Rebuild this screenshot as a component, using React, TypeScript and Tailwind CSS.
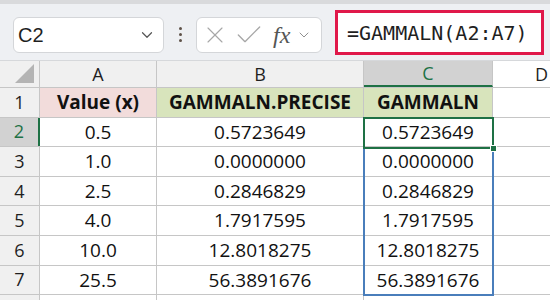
import { ChevronDown, X, Check } from "lucide-react";

const rows = [
  ["0.5", "0.5723649", "0.5723649"],
  ["1.0", "0.0000000", "0.0000000"],
  ["2.5", "0.2846829", "0.2846829"],
  ["4.0", "1.7917595", "1.7917595"],
  ["10.0", "12.8018275", "12.8018275"],
  ["25.5", "56.3891676", "56.3891676"],
];

const cellFont = { fontFamily: '"Open Sans", "Noto Sans", sans-serif' };

export default function App() {
  return (
    <div className="w-[550px] h-[300px] overflow-hidden bg-white relative" style={cellFont}>
      {/* top strip */}
      <div className="h-[4px] bg-[#d9dadc] shadow-[0_1px_2px_rgba(0,0,0,0.15)]" />

      {/* formula toolbar */}
      <div className="h-[57px] bg-[#eef0f3] flex items-start pt-[9px] border-b border-[#d6d8db]">
        <div className="ml-[13px] mt-[4px] w-[151px] h-[36px] bg-white border border-[#d4d6d9] rounded-[6px] flex items-center justify-between pl-[4px] pr-[7px]">
          <span className="text-[20px] text-[#1f1f1f]" style={{ fontFamily: '"Liberation Sans", Arial, sans-serif' }}>C2</span>
          <ChevronDown size={18} strokeWidth={1.6} className="text-[#555]" />
        </div>

        <div className="w-[32px] mt-[14px] flex flex-col items-center gap-[3px]">
          <span className="w-[3px] h-[3px] bg-[#5e5148] rounded-full" />
          <span className="w-[3px] h-[3px] bg-[#5e5148] rounded-full" />
          <span className="w-[3px] h-[3px] bg-[#5e5148] rounded-full" />
        </div>

        <div className="mt-[4px] w-[126px] h-[36px] bg-white border border-[#d4d6d9] rounded-[6px] flex items-center pl-[4px]">
          <X size={28} strokeWidth={1} className="text-[#a7a7a7]" />
          <Check size={32} strokeWidth={1} className="text-[#a7a7a7] ml-[4px]" />
          <span className="ml-[8px] text-[24px] italic text-[#555] leading-none" style={{ fontFamily: '"Liberation Serif", "Times New Roman", serif' }}>
            fx
          </span>
          <ChevronDown size={16} strokeWidth={1.4} className="text-[#888] ml-[6px]" />
        </div>

        <div className="ml-[13px] mt-[-3px] w-[209px] h-[45px] bg-white border-[3px] border-[#e0184a] flex items-center pl-[9px]">
          <span className="text-[20px] text-[#1f1f1f]" style={{ fontFamily: '"DejaVu Sans Mono", monospace' }}>
            =GAMMALN(A2:A7)
          </span>
        </div>
      </div>

      {/* column headers */}
      <div className="flex h-[27px] bg-[#f0f0f0] border-b border-[#c6c6c6] text-[18px] text-[#1f1f1f]">
        <div className="w-[40px] border-r border-[#c6c6c6] relative">
          <div className="absolute right-[5px] bottom-[4px] w-0 h-0 border-l-[19px] border-l-transparent border-b-[19px] border-b-[#b4b4b4]" />
        </div>
        <div className="w-[117px] border-r border-[#c6c6c6] flex items-center justify-center">A</div>
        <div className="w-[207px] border-r border-[#c6c6c6] flex items-center justify-center">B</div>
        <div className="w-[129px] bg-[#d2d2d2] border-r border-[#c6c6c6] border-b-2 border-b-[#1e7145] flex items-center justify-center text-[#1e7145]">
          C
        </div>
        <div className="flex-1 flex items-center justify-end pr-[2px] bg-white">D</div>
      </div>

      {/* row 1 */}
      <div className="flex h-[29.6px] border-b border-[#c6c6c6] text-[19px]">
        <div className="w-[40px] bg-[#f0f0f0] border-r border-[#c6c6c6] flex items-center justify-center text-[18px] text-[#1f1f1f]">1</div>
        <div className="w-[117px] bg-[#f2dcdb] border-r border-[#c6c6c6] flex items-center justify-center font-bold text-[#111]">Value (x)</div>
        <div className="w-[207px] bg-[#d8e4bc] border-r border-[#c6c6c6] flex items-center justify-center font-bold text-[#111]">GAMMALN.PRECISE</div>
        <div className="w-[129px] bg-[#d8e4bc] border-r border-[#c6c6c6] flex items-center justify-center font-bold text-[#111]">GAMMALN</div>
        <div className="flex-1 bg-white" />
      </div>

      {rows.map((r, i) => (
        <div key={i} className="flex h-[29.6px] border-b border-[#c6c6c6] text-[19px] text-[#111]">
          <div
            className={
              i === 0
                ? "w-[40px] bg-[#d2d2d2] border-r-2 border-r-[#1e7145] flex items-center justify-center text-[18px] text-[#1e7145]"
                : "w-[40px] bg-[#f0f0f0] border-r border-[#c6c6c6] flex items-center justify-center text-[18px] text-[#1f1f1f]"
            }
          >
            {i + 2}
          </div>
          <div className="w-[117px] border-r border-[#c6c6c6] flex items-center justify-center">{r[0]}</div>
          <div className="w-[207px] border-r border-[#c6c6c6] flex items-center justify-center">{r[1]}</div>
          <div className="w-[129px] border-r border-[#c6c6c6] flex items-center justify-center">{r[2]}</div>
          <div className="flex-1 bg-white" />
        </div>
      ))}
      <div className="flex h-[10px]">
        <div className="w-[40px] bg-[#f0f0f0] border-r border-[#c6c6c6]" />
        <div className="w-[117px] border-r border-[#c6c6c6]" />
        <div className="w-[207px] border-r border-[#c6c6c6]" />
        <div className="w-[129px]" />
      </div>

      {/* selection overlays */}
      <div className="absolute left-[363px] top-[117px] w-[131px] h-[179px] border-2 border-[#4a7ebb] pointer-events-none" />
      <div className="absolute left-[363px] top-[117px] w-[131px] h-[32px] border-2 border-[#1e7145] pointer-events-none" />
      <div className="absolute left-[490px] top-[145px] w-[7px] h-[7px] bg-[#1e7145] border border-white pointer-events-none" />
    </div>
  );
}
